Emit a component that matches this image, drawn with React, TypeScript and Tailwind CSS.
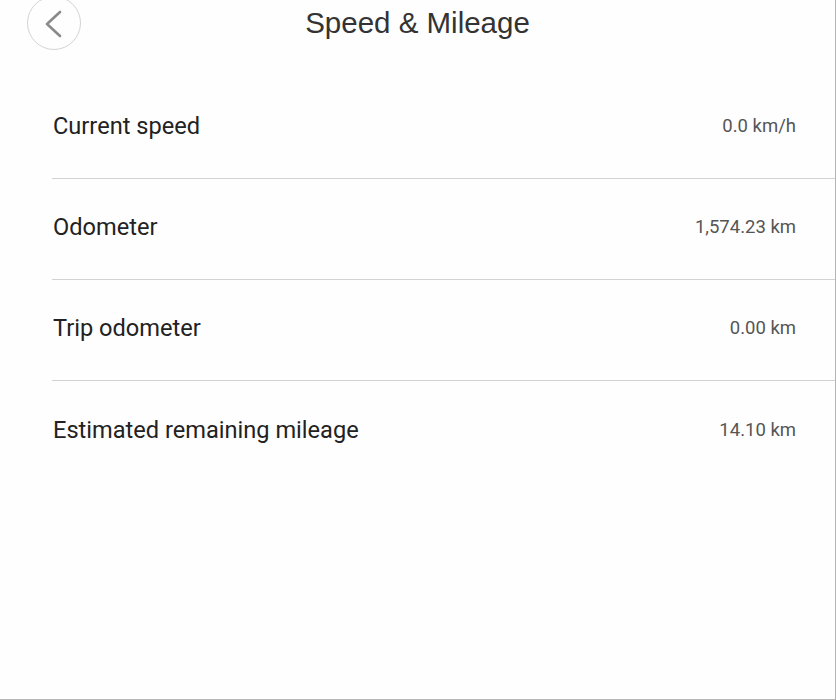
import React from 'react';

const rows = [
  { label: 'Current speed', value: '0.0 km/h' },
  { label: 'Odometer', value: '1,574.23 km' },
  { label: 'Trip odometer', value: '0.00 km' },
  { label: 'Estimated remaining mileage', value: '14.10 km' },
];

export default function App() {
  return (
    <div className="w-[836px] h-[700px] bg-[#fefefe] border-r border-b border-[#b5b5b5] overflow-hidden">
      {/* Header */}
      <div className="grid grid-cols-[1fr_auto_1fr] items-start h-[78px]">
        <div className="pl-[27px] -mt-[4px]">
          <button className="w-[54px] h-[54px] rounded-full border border-[#d4d4d4] flex items-center justify-center">
            <svg width="16" height="26" viewBox="0 0 16 26" fill="none" overflow="visible" className="-ml-[3px] -mt-[2px]">
              <path d="M15 3 L2 15 L15 27" stroke="#8a8a8a" strokeWidth="2.6" strokeLinecap="round" strokeLinejoin="round" />
            </svg>
          </button>
        </div>
        <h1
          className="text-[29.5px] leading-[46px] text-[#333]"
          style={{ fontFamily: '"Liberation Sans", Arial, sans-serif' }}
        >
          Speed &amp; Mileage
        </h1>
        <div />
      </div>

      {/* Rows */}
      <div className="pl-[52px]" style={{ fontFamily: 'Roboto, "Noto Sans", sans-serif' }}>
        {rows.map((row, idx) => (
          <div
            key={row.label}
            className={`flex items-center justify-between h-[101px] pb-[2px] pr-[39px] ${
              idx < rows.length - 1 ? 'border-b border-[#d2d2d2]' : ''
            }`}
          >
            <span className="text-[23.6px] text-[#222] pl-[1px]">{row.label}</span>
            <span className="text-[18.5px] text-[#555]">{row.value}</span>
          </div>
        ))}
      </div>
    </div>
  );
}
